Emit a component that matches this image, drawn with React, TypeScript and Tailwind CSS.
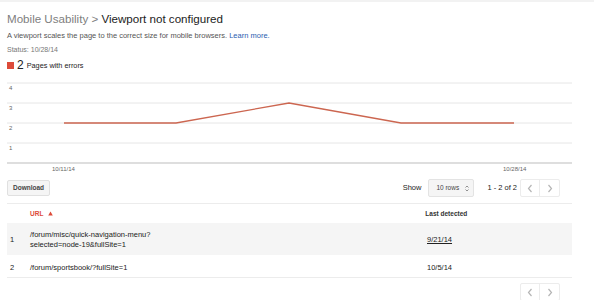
import React from "react";

function Pager() {
  return (
    <div className="flex h-[18px] border border-[#ececec] rounded-[2px]">
      <div className="w-[19px] flex items-center justify-center border-r border-[#ececec]">
        <svg width="6" height="9" viewBox="0 0 6 9"><path d="M4.5 1 L1.5 4.5 L4.5 8" fill="none" stroke="#b5b5b5" strokeWidth="1.2" /></svg>
      </div>
      <div className="w-[19px] flex items-center justify-center">
        <svg width="6" height="9" viewBox="0 0 6 9"><path d="M1.5 1 L4.5 4.5 L1.5 8" fill="none" stroke="#b5b5b5" strokeWidth="1.2" /></svg>
      </div>
    </div>
  );
}

export default function App() {
  const xs = [57, 169, 282, 394, 507];
  const vals = [2, 2, 3, 2, 2];
  const yFor = (v: number) => 85 - v * 20;
  const pts = xs.map((x, i) => `${x},${yFor(vals[i])}`).join(" ");
  return (
    <div className="w-[594px] h-[300px] bg-white overflow-hidden text-[#222] font-['Liberation_Sans',Arial,sans-serif]">
      <div className="h-[2px] bg-[#f2f2f2]" />
      <div className="pl-[7px] w-[572px]">
        <h1 className="mt-[9px] text-[11.6px] leading-[15px] whitespace-nowrap">
          <span className="text-[#808080]">Mobile Usability &gt; </span>
          <span className="text-[#222]">Viewport not configured</span>
        </h1>
        <p className="mt-[5px] text-[7.5px] leading-[10px] text-[#555] whitespace-nowrap">
          A viewport scales the page to the correct size for mobile browsers.{" "}
          <span className="text-[#2a5db0]">Learn more.</span>
        </p>
        <p className="mt-[4px] text-[7px] leading-[10px] text-[#777]">Status: 10/28/14</p>
        <div className="mt-[3px] flex items-center h-[14px]">
          <div className="w-[7px] h-[7px] bg-[#dd4b39]" />
          <span className="ml-[3px] text-[12px] leading-[14px] text-[#222]">2</span>
          <span className="ml-[3px] text-[7.3px] leading-[14px] text-[#222] mt-[1px]">Pages with errors</span>
        </div>
        <div className="mt-[6px] relative w-[565px] h-[98px]">
          <svg className="absolute left-0 top-0" width="565" height="98" viewBox="0 0 565 98">
            {[5, 25, 45, 65].map((y) => (
              <line key={y} x1="0" x2="565" y1={y} y2={y} stroke="#e6e6e6" strokeWidth="1" />
            ))}
            <line x1="0" x2="565" y1="85" y2="85" stroke="#bdbdbd" strokeWidth="1" />
            <polyline points={pts} fill="none" stroke="#cc6650" strokeWidth="1.3" />
          </svg>
          {[4, 3, 2, 1].map((n, i) => (
            <span key={n} className="absolute left-[2px] text-[6px] leading-[6px] text-[#666]" style={{ top: 7 + i * 20 }}>
              {n}
            </span>
          ))}
          <span className="absolute left-[45px] top-[88px] text-[6px] leading-[6px] text-[#666]">10/11/14</span>
          <span className="absolute left-[496px] top-[88px] text-[6px] leading-[6px] text-[#666]">10/28/14</span>
        </div>
        <div className="mt-[3px] flex items-center h-[18px] w-[565px]">
          <div className="h-[16px] px-[5px] flex items-center bg-[#f5f5f5] border border-[#e0e0e0] rounded-[2px] text-[6.5px] font-bold text-[#444]">
            Download
          </div>
          <div className="flex-1" />
          <span className="text-[7.5px] text-[#222]">Show</span>
          <div className="ml-[7px] w-[46px] h-[18px] bg-[#f5f5f5] border border-[#e3e3e3] rounded-[2px] flex items-center pl-[7px] text-[6.5px] text-[#444]">
            10 rows
            <svg className="ml-[6px]" width="4" height="7" viewBox="0 0 4 7"><path d="M0.5 2.5 L2 1 L3.5 2.5 M0.5 4.5 L2 6 L3.5 4.5" fill="none" stroke="#777" strokeWidth="0.8" /></svg>
          </div>
          <span className="ml-[13px] text-[7.5px] text-[#222]">1 - 2 of 2</span>
          <div className="ml-[3px] mr-[12px]">
            <Pager />
          </div>
        </div>
        <div className="mt-[6px] w-[565px] border-t border-[#ececec]">
          <div className="h-[19px] flex items-center text-[6.5px]">
            <span className="ml-[23px] text-[#dd4b39] font-bold">URL</span>
            <svg className="ml-[5px]" width="5" height="5" viewBox="0 0 5 5"><path d="M2.5 0.5 L4.8 4.5 L0.2 4.5 Z" fill="#dd4b39" /></svg>
            <span className="ml-[372px] font-bold text-[#333]">Last detected</span>
          </div>
          <div className="h-[32px] pt-[1px] bg-[#f5f5f5] flex items-center text-[7.5px] leading-[10px] text-[#222]">
            <span className="ml-[3px] w-[20px]">1</span>
            <div className="w-[397px]">
              <div>/forum/misc/quick-navigation-menu?</div>
              <div>selected=node-19&amp;fullSite=1</div>
            </div>
            <span className="underline">9/21/14</span>
          </div>
          <div className="h-[23px] pt-[3px] flex items-center text-[7.5px] leading-[10px] text-[#222] border-b border-[#ececec]">
            <span className="ml-[3px] w-[20px]">2</span>
            <div className="w-[397px]">/forum/sportsbook/?fullSite=1</div>
            <span>10/5/14</span>
          </div>
        </div>
        <div className="mt-[5px] w-[565px] flex justify-end">
          <div className="mr-[12px]">
            <Pager />
          </div>
        </div>
      </div>
    </div>
  );
}
